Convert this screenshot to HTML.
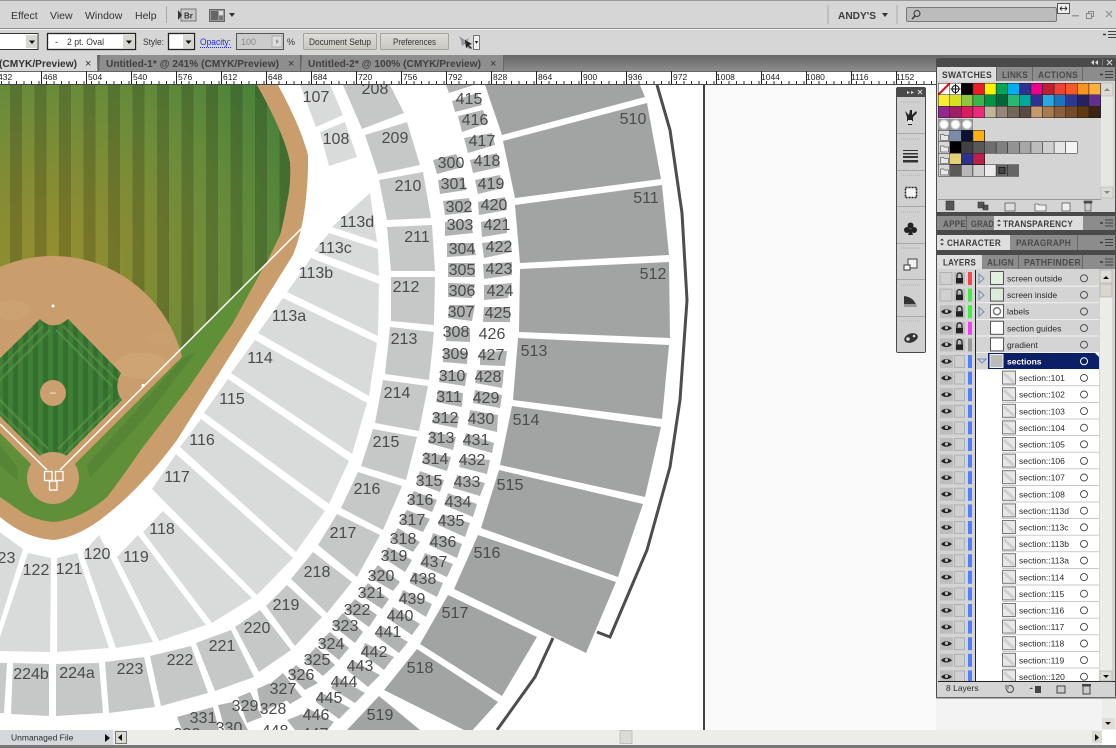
<!DOCTYPE html>
<html><head><meta charset="utf-8"><title>Illustrator</title>
<style>
html,body{margin:0;padding:0;background:#fff;width:1116px;height:748px;overflow:hidden}
svg{display:block}
text{font-family:"Liberation Sans",sans-serif}
.lb text{font-size:16px;fill:#4b4b4b;text-anchor:middle}
.m{font-size:10.5px;fill:#333}
.c{font-size:9px;fill:#333}
.t{font-size:10.5px;font-weight:bold}
.r{font-size:8.5px;fill:#222}
.p{font-size:9.5px;font-weight:bold;fill:#3d3d3d;letter-spacing:.3px}
.d{font-size:9.5px;font-weight:bold;fill:#4a4a4a;letter-spacing:.3px}
.n{font-size:8.5px;fill:#2a2a2a}
</style></head><body>
<svg width="1116" height="748" viewBox="0 0 1116 748" xmlns="http://www.w3.org/2000/svg">
<defs>
<clipPath id="cv"><rect x="0" y="85" width="1116" height="645"/></clipPath>
<clipPath id="of"><path d="M0 85L257 85Q285 135 290 163Q291 185 287 202Q284 220 280 235L266 264L53 477L0 424Z"/></clipPath>
<clipPath id="inf"><path d="M53 486L200 339L53 150L-94 339Z"/></clipPath>
<clipPath id="dia"><path d="M40 319Q53 332 68 319L121 373Q113 388 122 400L53 469L-16 400Q-7 388-15 373Z"/></clipPath>
<radialGradient id="gr" gradientUnits="userSpaceOnUse" cx="50" cy="265" r="290">
<stop offset="0" stop-color="#958f2e"/><stop offset=".3" stop-color="#858c33"/><stop offset=".6" stop-color="#6a8c3a"/><stop offset="1" stop-color="#44803a"/>
</radialGradient>
<pattern id="st" patternUnits="userSpaceOnUse" x="10" y="0" width="24.5" height="10"><rect width="12" height="10" fill="#000" fill-opacity=".17"/></pattern>
<pattern id="st2" patternUnits="userSpaceOnUse" x="3" y="0" width="10" height="10"><rect width="5" height="10" fill="#346f30"/></pattern>
<pattern id="mn" patternUnits="userSpaceOnUse" x="1" y="81" width="7.5" height="4"><rect width="1" height="4" fill="#333"/></pattern>
<pattern id="mj" patternUnits="userSpaceOnUse" x="41" y="71" width="45" height="14"><rect width="1" height="14" fill="#222"/></pattern>
<linearGradient id="tb" x1="0" y1="0" x2="0" y2="1"><stop offset="0" stop-color="#666"/><stop offset="1" stop-color="#8c8c8c"/></linearGradient>
<linearGradient id="btn" x1="0" y1="0" x2="0" y2="1"><stop offset="0" stop-color="#e0ded8"/><stop offset="1" stop-color="#c9c7c0"/></linearGradient>
<radialGradient id="rw"><stop offset="0" stop-color="#fff"/><stop offset=".6" stop-color="#fff"/><stop offset="1" stop-color="#999"/></radialGradient>

<g id="folder"><rect width="11" height="11" fill="#d8d8d8"/><path d="M2 4h3l1 1h4v5h-8z" fill="#e8e8e8" stroke="#666" stroke-width=".8"/></g>
<g id="eye"><rect x="940" y="2" width="13" height="13" fill="#bdbdbd"/><path d="M941 8.500Q946 3.500 952 8.500Q946 13 941 8.500Z" fill="#222"/><circle cx="946.500" cy="8" r="1.600" fill="#bbb"/></g>
<g id="blank"><rect x="940" y="2.500" width="12" height="12" fill="#d0d0d0" stroke="#b0b0b0"/></g>
<g id="lock"><rect x="954" y="2" width="11" height="13" fill="#bdbdbd"/><path d="M957 8v-2.500a2.500 2.500 0 0 1 5 0v2.500" fill="none" stroke="#222" stroke-width="1.300"/><rect x="956" y="8" width="7" height="5.500" fill="#222"/></g>
<g id="nolock"><rect x="954.500" y="2.500" width="10" height="12" fill="#d0d0d0" stroke="#b0b0b0"/></g>
<g id="sub"><rect x="976" y="0" width="123" height="16.600" fill="#fff"/><rect x="1002" y="15.800" width="97" height="1" fill="#bbb"/>
<use href="#eye"/><use href="#nolock"/><rect x="968" y="2" width="4" height="13" fill="#4f80ff"/>
<rect x="1002.500" y="1.500" width="13" height="13" fill="#e8e8e8" stroke="#777"/><path d="M1004 4l10 9" stroke="#cfcfcf" stroke-width="3"/>
<circle cx="1084" cy="8.300" r="3.500" fill="#fff" stroke="#444" stroke-width=".9"/></g>
<g id="top"><rect x="976" y="0" width="123" height="15.800" fill="#d4d4d4"/><rect x="976" y="15.800" width="123" height=".9" fill="#f4f4f4"/><circle cx="1084" cy="8.300" r="3.500" fill="none" stroke="#444" stroke-width=".9"/></g>
<g id="ham"><rect x="0" y="-.7" width="3" height="1.400" fill="#333"/><rect x="5" y="-3.500" width="8" height="1" fill="#444"/><rect x="5" y="-.5" width="8" height="1" fill="#444"/><rect x="5" y="2.500" width="8" height="1" fill="#444"/></g>
</defs>

<!-- canvas -->
<rect x="0" y="85" width="1116" height="645" fill="#fff"/>
<rect x="705" y="85" width="411" height="645" fill="#fafafa"/>
<g clip-path="url(#cv)">
<!-- field -->
<path d="M278 85Q300 125 308 155L308 168Q307 200 302 225Q298 243 293 255L240 340L177 440Q140 490 100 520Q75 538 53 540Q25 538 0 517L0 85Z" fill="#c99e6c"/>
<path d="M257 85Q285 135 290 163Q291 185 287 202Q284 220 280 235L263 268L233 323L187 390L143 447Q120 480 107 497Q80 520 53 522Q35 520 23 513L0 497L0 85Z" fill="#5f8f38"/>
<path d="M87 465L183 358L196 352L150 412L90 478Z" fill="#568535"/>
<path d="M0 445L18 468L17 480L0 465Z" fill="#568535"/>
<g clip-path="url(#of)"><rect x="0" y="85" width="300" height="450" fill="url(#gr)"/><rect x="0" y="85" width="300" height="450" fill="url(#st)"/></g>
<circle cx="53" cy="389" r="133" fill="#c99e6c" clip-path="url(#inf)"/>
<ellipse cx="12" cy="310" rx="18" ry="10" fill="#d4ab7c" opacity=".3"/>
<ellipse cx="142" cy="366" rx="28" ry="13" fill="#d4ab7c" opacity=".45"/>
<ellipse cx="160" cy="338" rx="14" ry="6" fill="#d4ab7c" opacity=".2"/>
<path d="M40 319Q53 332 68 319L121 373Q113 388 122 400L53 469L-16 400Q-7 388-15 373Z" fill="#3f7f37"/>
<g clip-path="url(#dia)">
<rect x="-20" y="315" width="150" height="160" fill="url(#st2)"/>
<path d="M63 326L118 381M56 330L112 386M118 400L62 456M111 395L58 449M43 326L-12 381M50 330L-6 386M-12 400L44 456M-5 395L48 449" stroke="#6a9a4c" stroke-width="2.500" opacity=".5" fill="none"/>
</g>
<circle cx="53" cy="478" r="26" fill="#cb9f6f"/>
<circle cx="53" cy="393" r="13" fill="#cb9f6f"/>
<rect x="50" y="392.500" width="6" height="1.200" fill="#eadbc4"/>
<circle cx="53" cy="306" r="1.500" fill="#fff"/>
<circle cx="143" cy="385.500" r="1.500" fill="#fff"/>
<path d="M302 228L60 470M0 424L47 470" stroke="#fff" stroke-width="1.500" fill="none"/>
<g fill="none" stroke="#fff" stroke-width="1.300"><rect x="44.500" y="471.500" width="7.500" height="9"/><rect x="55.500" y="471.500" width="7.500" height="9"/><rect x="49.500" y="481" width="7.500" height="9"/></g>

<!-- 100 level -->
<path fill="#d9dada" d="M316 127 343 115 330 85 300 85ZM320 132 345 122 357 157 329 166ZM332 227 370 193 377 242ZM329 233 378 249 379 276 314 251ZM311 258 379 284 378 336 287 292ZM283 298 377 343 369 396 258 333ZM255 340 367 403 352 454 231 373ZM228 379 349 461 329 504 204 413ZM201 419 325 511 296 552 180 447ZM176 454 293 558 257 595 152 489ZM163 511 252 598 212 623 143 532ZM138 535 206 625 159 641 117 557ZM99 535 153 642 116 648 83 553ZM77 553 109 648 57 652 57 558ZM28 553 51 558 50 652 0 651 0 637ZM0 532 5 536 23 549 0 622Z"/>
<!-- 200 level -->
<path fill="#c6c7c7" d="M343 85 390 85 404 113 362 129ZM365 135 407 122 420 165 378 174ZM379 180 423 172 431 218 387 220ZM387 227 432 225 435 271 391 271ZM391 277 435 277 434 325 391 321ZM390 327 434 332 429 380 385 374ZM383 380 428 386 419 431 375 423ZM373 429 417 437 406 480 361 466ZM358 472 402 486 383 530 341 508ZM337 514 380 535 357 577 318 545ZM313 552 352 582 327 613 291 579ZM287 585 322 617 295 646 266 606ZM260 610 291 650 259 672 235 627ZM231 630 254 677 215 691 196 643ZM191 646 208 693 161 706 150 656ZM144 657 155 707 109 713 105 662ZM99 663 103 713 56 716 56 664ZM49 664 49 716 11 714 13 663ZM7 663 4 713 0 713 0 663Z"/>
<!-- 300 level -->
<path fill="#b1b2b2" d="M433 160 456 154 463 167 437 174ZM438 180 463 177 466 190 440 194ZM443 201 469 198 472 212 445 215ZM445 222 470 220 473 233 445 236ZM447 243 473 243 476 255 447 257ZM448 263 475 263 475 277 448 277ZM448 283 475 284 472 298 448 297ZM449 305 475 305 472 321 448 318ZM446 327 470 328 470 342 446 341ZM444 348 468 352 467 364 443 362ZM441 370 467 373 465 386 439 382ZM438 390 463 393 462 407 436 402ZM435 412 459 416 457 428 432 423ZM431 431 456 437 453 450 428 443ZM425 452 451 457 447 471 422 463ZM420 471 444 480 440 492 416 483ZM414 491 437 500 432 512 407 502ZM407 510 430 519 423 532 399 522ZM398 528 420 542 413 552 390 540ZM388 547 412 560 405 572 382 557ZM378 565 400 582 393 591 369 577ZM368 583 389 599 382 609 359 594ZM355 599 377 615 369 627 345 610ZM343 613 363 632 355 643 332 625ZM330 632 349 648 339 660 318 643ZM316 647 335 665 323 676 304 660ZM296 665 318 683 305 690 288 673ZM283 673 302 697 290 704 271 683ZM257 689 270 683 288 700 262 712ZM238 697 250 692 262 717 247 723ZM218 705 233 702 248 730 225 730ZM177 717 213 707 219 730 182 730Z"/>
<!-- 400 level -->
<path fill="#b1b2b2" d="M446 85 474 85 449 93ZM452 101 477 93 482 105 455 112ZM458 116 483 110 488 123 462 132ZM464 138 492 133 495 145 468 153ZM470 160 497 153 500 167 473 173ZM475 180 500 175 503 188 478 194ZM478 202 505 197 507 210 479 215ZM481 222 506 217 507 233 482 237ZM482 243 510 240 512 252 484 258ZM483 264 512 262 512 275 484 279ZM484 285 512 283 508 298 484 300ZM484 307 510 307 510 322 483 322ZM480 352 507 351 505 366 480 365ZM477 370 504 370 502 388 475 383ZM475 390 502 395 500 408 473 403ZM470 410 498 415 497 432 468 425ZM466 433 494 443 492 453 463 445ZM462 457 490 460 487 474 459 467ZM457 475 485 483 480 496 453 488ZM448 493 477 504 473 517 444 505ZM442 514 470 523 465 537 438 525ZM433 533 462 544 457 558 429 545ZM425 553 453 564 447 577 420 565ZM413 572 443 583 437 597 410 583ZM403 590 432 604 426 617 399 600ZM393 607 420 624 412 635 387 618ZM380 625 408 642 399 653 376 636ZM365 643 394 657 384 670 361 653ZM352 660 380 675 368 687 347 670ZM337 677 365 693 355 703 331 688ZM320 692 350 708 339 719 316 702ZM307 708 334 722 325 733 303 718ZM287 720 302 714 325 730 295 730Z"/>
<!-- 500 level -->
<path fill="#a2a3a3" d="M485 85 640 85 645 97 502 135ZM503 141 647 103 661 179 515 198ZM515 205 662 185 669 255 520 263ZM520 269 669 262 670 338 519 332ZM518 338 669 345 662 419 513 400ZM512 406 661 427 645 497 500 465ZM499 470 643 504 618 577 481 528ZM478 535 616 582 586 653 454 589ZM448 595 537 637 502 696 420 644ZM417 649 498 702 470 733 384 690ZM379 696 420 730 347 730Z"/>
<!-- outer wall -->
<path d="M657 85L670 130L682 213L687 300L680 400L670 467L647 550L610 637L597 632M553 638L535 677L497 730" fill="none" stroke="#4d4d4d" stroke-width="3"/>
<rect x="703" y="85" width="2" height="645" fill="#444"/>
<g class="lb">
<text x="316" y="102">107</text><text x="336" y="144">108</text><text x="375" y="94">208</text><text x="395" y="143">209</text><text x="408" y="191">210</text><text x="417" y="242">211</text><text x="406" y="292">212</text><text x="404" y="344">213</text><text x="397" y="398">214</text><text x="386" y="447">215</text><text x="367" y="494">216</text><text x="343" y="538">217</text><text x="317" y="577">218</text><text x="286" y="610">219</text><text x="257" y="633">220</text><text x="222" y="651">221</text><text x="180" y="665">222</text><text x="130" y="674">223</text><text x="77" y="678">224a</text><text x="31" y="679">224b</text>
<text x="357" y="227">113d</text><text x="335" y="253">113c</text><text x="316" y="278">113b</text><text x="289" y="321">113a</text><text x="260" y="363">114</text><text x="232" y="404">115</text><text x="202" y="445">116</text><text x="177" y="482">117</text><text x="162" y="534">118</text><text x="136" y="562">119</text><text x="97" y="559">120</text><text x="69" y="574">121</text><text x="36" y="575">122</text><text x="2" y="563">123</text>
<text x="451" y="168">300</text><text x="454" y="189">301</text><text x="459" y="212">302</text><text x="460" y="230">303</text><text x="462" y="254">304</text><text x="462" y="275">305</text><text x="462" y="296">306</text><text x="461" y="317">307</text><text x="456" y="337">308</text><text x="455" y="359">309</text><text x="452" y="381">310</text><text x="449" y="402">311</text><text x="445" y="423">312</text><text x="441" y="443">313</text><text x="435" y="464">314</text><text x="429" y="486">315</text><text x="420" y="505">316</text><text x="412" y="525">317</text><text x="403" y="544">318</text><text x="394" y="561">319</text><text x="381" y="581">320</text><text x="371" y="598">321</text><text x="357" y="615">322</text><text x="345" y="631">323</text><text x="331" y="649">324</text><text x="317" y="665">325</text><text x="301" y="680">326</text><text x="283" y="694">327</text><text x="273" y="714">328</text><text x="245" y="711">329</text><text x="229" y="733">330</text><text x="203" y="723">331</text><text x="187" y="739">332</text>
<text x="469" y="104">415</text><text x="475" y="125">416</text><text x="482" y="146">417</text><text x="487" y="166">418</text><text x="491" y="189">419</text><text x="494" y="210">420</text><text x="497" y="230">421</text><text x="499" y="252">422</text><text x="499" y="274">423</text><text x="500" y="296">424</text><text x="498" y="318">425</text><text x="492" y="339">426</text><text x="491" y="360">427</text><text x="488" y="382">428</text><text x="486" y="403">429</text><text x="481" y="424">430</text><text x="476" y="445">431</text><text x="472" y="465">432</text><text x="467" y="487">433</text><text x="458" y="507">434</text><text x="451" y="526">435</text><text x="443" y="547">436</text><text x="434" y="567">437</text><text x="423" y="584">438</text><text x="412" y="604">439</text><text x="400" y="621">440</text><text x="388" y="637">441</text><text x="374" y="657">442</text><text x="360" y="671">443</text><text x="344" y="687">444</text><text x="329" y="703">445</text><text x="316" y="720">446</text><text x="315" y="739">447</text><text x="275" y="736">448</text>
<text x="633" y="124">510</text><text x="646" y="203">511</text><text x="653" y="279">512</text><text x="534" y="356">513</text><text x="526" y="425">514</text><text x="510" y="490">515</text><text x="487" y="558">516</text><text x="455" y="618">517</text><text x="420" y="673">518</text><text x="380" y="720">519</text>
</g>
</g>

<!-- menu bar -->
<rect x="0" y="0" width="1116" height="55" fill="#d6d6d6"/>
<rect x="0" y="0" width="1116" height="1" fill="#999"/>
<rect x="0" y="28" width="1116" height="1" fill="#8f8f8f"/>
<rect x="0" y="29" width="1116" height="1" fill="#eee"/>
<text class="m" x="11" y="19">Effect</text><text class="m" x="50" y="19">View</text><text class="m" x="85" y="19">Window</text><text class="m" x="135" y="19">Help</text>
<rect x="166" y="6" width="1" height="17" fill="#aaa"/>
<rect x="181" y="9" width="15" height="12" fill="#c8c8c8" stroke="#777"/><path d="M178 10l4 5-4 5z" fill="#333"/>
<text x="184" y="18.500" style="font-size:8px;font-weight:bold;fill:#333">Br</text>
<rect x="209.500" y="9.500" width="15" height="12" fill="#999" stroke="#666"/><rect x="211" y="11" width="7" height="9" fill="#666"/><rect x="219" y="11" width="4" height="4" fill="#ddd"/><rect x="219" y="16" width="4" height="4" fill="#777"/>
<path d="M229 13h6l-3 4z" fill="#333"/>
<rect x="827.500" y="5" width="1" height="19" fill="#aaa"/>
<text x="838" y="19" style="font-size:10.500px;font-weight:bold;fill:#3c3c3c" textLength="38" lengthAdjust="spacingAndGlyphs">ANDY'S</text>
<path d="M882 13h6l-3 4z" fill="#333"/>
<rect x="896.500" y="5" width="1" height="19" fill="#aaa"/>
<rect x="906.500" y="7.500" width="150" height="14" rx="1.500" fill="#bcbcbc" stroke="#777"/>
<circle cx="917" cy="13.500" r="3" fill="none" stroke="#333"/><path d="M915 16l-3 3" stroke="#333" stroke-width="1.300"/>
<rect x="1057.500" y="3.500" width="12" height="10" fill="#eee" stroke="#555"/><path d="M1060 8.500h7M1060 8.500l2-2M1060 8.500l2 2M1067 8.500l-2-2M1067 8.500l-2 2" stroke="#111" fill="none" stroke-width=".8"/>
<rect x="1072" y="15" width="7" height="1.500" fill="#999"/>
<rect x="1088.500" y="11.500" width="5" height="5" fill="none" stroke="#888"/><rect x="1086.500" y="13.500" width="5" height="5" fill="#d6d6d6" stroke="#888"/>
<path d="M1106 11l6 6M1112 11l-6 6" stroke="#999" stroke-width="1.300"/>

<!-- control bar -->
<rect x="-3" y="33.500" width="41" height="16" fill="#fff" stroke="#333"/><rect x="26" y="35" width="11" height="13" fill="#d8d6d0"/><path d="M29 40.500h6l-3 3.500z" fill="#111"/>
<rect x="47.500" y="33.500" width="88" height="16" fill="#fff" stroke="#222" stroke-width="1.300"/><rect x="123" y="35" width="12" height="13.500" fill="#d8d6d0"/><path d="M126 40.500h6l-3 3.500z" fill="#111"/>
<text class="c" x="55" y="45">-</text><text class="c" x="67" y="45" textLength="37" lengthAdjust="spacingAndGlyphs">2 pt. Oval</text>
<text class="c" x="143" y="45" textLength="21" lengthAdjust="spacingAndGlyphs">Style:</text>
<rect x="168.500" y="33.500" width="26" height="16" fill="#fff" stroke="#222" stroke-width="1.300"/><rect x="183" y="35" width="11" height="13.500" fill="#d8d6d0"/><path d="M185.500 40.500h6l-3 3.500z" fill="#111"/>
<text x="200" y="45" style="font-size:9px;fill:#2030e0" textLength="31" lengthAdjust="spacingAndGlyphs">Opacity:</text><path d="M200 47.500h32" stroke="#2030e0" stroke-dasharray="1 1"/>
<rect x="236.500" y="33.500" width="47" height="16" fill="#ccc" stroke="#555"/><text x="241" y="45" style="font-size:9px;fill:#8a8a8a">100</text>
<rect x="272" y="36" width="10" height="11" fill="#ddd" stroke="#aaa"/><path d="M276 39v5l3-2.500z" fill="#999"/>
<text class="c" x="287" y="45">%</text>
<rect x="303.500" y="33.500" width="73" height="16" rx="1" fill="url(#btn)" stroke="#a5a39c"/><text class="c" x="309" y="45" textLength="62" lengthAdjust="spacingAndGlyphs">Document Setup</text>
<rect x="380.500" y="33.500" width="68" height="16" rx="1" fill="url(#btn)" stroke="#a5a39c"/><text class="c" x="393" y="45" textLength="43" lengthAdjust="spacingAndGlyphs">Preferences</text>
<path d="M459 36l6 4 4-2-2 5 3 6-3-1-2-4-3 2-1-5z" fill="#999"/><path d="M465 40l1 8 2-2 3 3 1-1-3-3 3-1z" fill="#222"/>
<rect x="473.500" y="35.500" width="6" height="14" fill="#eee" stroke="#777"/><path d="M475 41h3l-1.500 3z" fill="#111"/>
<use href="#ham" x="1103" y="34.500"/>

<!-- tabs -->
<rect x="0" y="55" width="1116" height="16" fill="url(#tb)"/>
<rect x="0" y="55" width="97" height="16" fill="#d6d6d6"/>
<rect x="100" y="55" width="200" height="16" fill="#8e8e8e"/><rect x="302" y="55" width="201" height="16" fill="#8e8e8e"/>
<rect x="300" y="55" width="1" height="16" fill="#666"/><rect x="98" y="55" width="1" height="16" fill="#666"/><rect x="503" y="55" width="1" height="16" fill="#666"/>
<text class="t" x="-1" y="67" fill="#333" textLength="78" lengthAdjust="spacingAndGlyphs">(CMYK/Preview)</text>
<text x="85" y="67" style="font-size:11px;fill:#333">×</text>
<text class="t" x="106" y="67" fill="#404040" textLength="173" lengthAdjust="spacingAndGlyphs">Untitled-1* @ 241% (CMYK/Preview)</text>
<text x="288" y="67" style="font-size:11px;fill:#333">×</text>
<text class="t" x="308" y="67" fill="#404040" textLength="173" lengthAdjust="spacingAndGlyphs">Untitled-2* @ 100% (CMYK/Preview)</text>
<text x="490" y="67" style="font-size:11px;fill:#333">×</text>

<!-- ruler -->
<rect x="0" y="71" width="1116" height="14" fill="#fff"/>
<rect x="0" y="71" width="1116" height="1" fill="#666"/>
<rect x="0" y="81" width="1116" height="4" fill="url(#mn)"/>
<rect x="0" y="71" width="1116" height="14" fill="url(#mj)"/>
<rect x="0" y="84" width="1116" height="1" fill="#444"/>
<g class="r"><text class="r" x="-2" y="80">432</text><text class="r" x="43" y="80">468</text><text class="r" x="88" y="80">504</text><text class="r" x="133" y="80">540</text><text class="r" x="178" y="80">576</text><text class="r" x="223" y="80">612</text><text class="r" x="268" y="80">648</text><text class="r" x="313" y="80">684</text><text class="r" x="358" y="80">720</text><text class="r" x="403" y="80">756</text><text class="r" x="448" y="80">792</text><text class="r" x="493" y="80">828</text><text class="r" x="538" y="80">864</text><text class="r" x="583" y="80">900</text><text class="r" x="628" y="80">936</text><text class="r" x="673" y="80">972</text><text class="r" x="716" y="80">1008</text><text class="r" x="761" y="80">1044</text><text class="r" x="806" y="80">1080</text><text class="r" x="851" y="80">1116</text><text class="r" x="896" y="80">1152</text></g>

<!-- tool strip -->
<rect x="896" y="87" width="30" height="266" rx="2" fill="#4a4a4a"/>
<path d="M907 91l3 1.500-3 1.500zM911 91l3 1.500-3 1.500z" fill="#ddd"/><path d="M918 90l4 4M922 90l-4 4" stroke="#ddd"/>
<rect x="897" y="97" width="28" height="255" fill="#d0d0d0"/>
<g fill="#a8a8a8"><rect x="897" y="133" width="28" height="1"/><rect x="897" y="170" width="28" height="1"/><rect x="897" y="206" width="28" height="1"/><rect x="897" y="243" width="28" height="1"/><rect x="897" y="279" width="28" height="1"/><rect x="897" y="316" width="28" height="1"/></g>
<g stroke="#b0b0b0" stroke-dasharray="1 1"><path d="M901 102h20M901 139h20M901 175h20M901 212h20M901 248h20M901 285h20M901 321h20"/></g>
<path d="M905 111l4 4 1-5 2 0 0 5 4-4 1 2-4 4v4h-1v4h-4v-4h-1v-4z" fill="#222"/><rect x="908" y="120" width="4" height="4" fill="#ddd"/>
<path d="M903 150h15v1h-15zM903 153h15v1.500h-15zM903 156h15v2h-15zM903 160h15v2.500h-15z" fill="#333"/>
<rect x="905.500" y="187.500" width="11" height="10" fill="#f4f4f4" stroke="#222" stroke-dasharray="2 1" stroke-width="1.500"/>
<circle cx="910.500" cy="225.500" r="3" fill="#222"/><circle cx="907" cy="230" r="3" fill="#222"/><circle cx="914" cy="230" r="3" fill="#222"/><path d="M910.500 228L908 235h5z" fill="#222"/>
<rect x="908" y="259" width="9" height="9" fill="#f2f2f2" stroke="#444"/><rect x="904" y="265" width="6" height="5" fill="#fff" stroke="#333"/>
<path d="M904 307v-11q10 1 13 11z" fill="#333"/><path d="M917 307h-13v-3h12z" fill="#999"/>
<ellipse cx="911" cy="338" rx="7" ry="4.500" fill="#333" transform="rotate(-20 911 338)"/><circle cx="908" cy="339" r="1.800" fill="#ddd"/><circle cx="914" cy="336" r="1.300" fill="#ddd"/>

<!-- right panel -->
<rect x="936" y="58" width="180" height="640" rx="2" fill="#4a4a4a"/>
<path d="M1094 60l-3 2.500 3 2.500zM1098 60l-3 2.500 3 2.500z" fill="#ddd"/><path d="M1107 60l5 5M1112 60l-5 5" stroke="#ddd"/>
<rect x="1102" y="59" width="1" height="7" fill="#777"/>

<!-- swatches tabs -->
<rect x="937" y="67" width="178" height="14" fill="#8c8c8c"/>
<rect x="937" y="67" width="59" height="14" fill="#dedede"/>
<rect x="1032" y="67" width="1" height="14" fill="#666"/><rect x="1082" y="67" width="1" height="14" fill="#666"/><rect x="996" y="67" width="1" height="14" fill="#666"/>
<text class="p" x="942" y="78" textLength="50" lengthAdjust="spacingAndGlyphs">SWATCHES</text>
<text class="d" x="1002" y="78" textLength="26" lengthAdjust="spacingAndGlyphs">LINKS</text>
<text class="d" x="1038" y="78" textLength="40" lengthAdjust="spacingAndGlyphs">ACTIONS</text>
<use href="#ham" x="1100" y="74.500"/>
<rect x="937" y="81" width="178" height="131" fill="#d4d4d4"/>
<!-- swatch grid -->
<g>
<rect x="938" y="83" width="164" height="35" fill="#222"/>
<rect x="938.500" y="83.500" width="11" height="11" fill="#fff"/><path d="M938.500 94.500l11-11" stroke="#e01010" stroke-width="2"/>
<rect x="950" y="83.500" width="11" height="11" fill="#fff"/><circle cx="955.500" cy="89" r="3.500" fill="none" stroke="#111"/><path d="M955.500 84v10M950.500 89h10" stroke="#111"/>
<g id="row1"><rect x="961.500" y="83.500" width="11" height="11" fill="#000"/><rect x="973.200" y="83.500" width="11" height="11" fill="#ed1c24"/><rect x="984.800" y="83.500" width="11" height="11" fill="#fff200"/><rect x="996.400" y="83.500" width="11" height="11" fill="#00a651"/><rect x="1008" y="83.500" width="11" height="11" fill="#00aeef"/><rect x="1019.600" y="83.500" width="11" height="11" fill="#2e3192"/><rect x="1031.200" y="83.500" width="11" height="11" fill="#ec008c"/><rect x="1042.800" y="83.500" width="11" height="11" fill="#be1e2d"/><rect x="1054.400" y="83.500" width="11" height="11" fill="#ef4136"/><rect x="1066" y="83.500" width="11" height="11" fill="#f15a29"/><rect x="1077.600" y="83.500" width="11" height="11" fill="#f7941e"/><rect x="1089.200" y="83.500" width="11" height="11" fill="#fbb040"/></g>
<g><rect x="938.500" y="95" width="11" height="11" fill="#f9ed32"/><rect x="950" y="95" width="11" height="11" fill="#d7df23"/><rect x="961.500" y="95" width="11" height="11" fill="#8dc63f"/><rect x="973.200" y="95" width="11" height="11" fill="#39b54a"/><rect x="984.800" y="95" width="11" height="11" fill="#009444"/><rect x="996.400" y="95" width="11" height="11" fill="#006838"/><rect x="1008" y="95" width="11" height="11" fill="#2bb673"/><rect x="1019.600" y="95" width="11" height="11" fill="#00a79d"/><rect x="1031.200" y="95" width="11" height="11" fill="#2e3192"/><rect x="1042.800" y="95" width="11" height="11" fill="#27aae1"/><rect x="1054.400" y="95" width="11" height="11" fill="#1c75bc"/><rect x="1066" y="95" width="11" height="11" fill="#2b3990"/><rect x="1077.600" y="95" width="11" height="11" fill="#262262"/><rect x="1089.200" y="95" width="11" height="11" fill="#662d91"/></g>
<g><rect x="938.500" y="106.500" width="11" height="11" fill="#92278f"/><rect x="950" y="106.500" width="11" height="11" fill="#9e1f63"/><rect x="961.500" y="106.500" width="11" height="11" fill="#da1c5c"/><rect x="973.200" y="106.500" width="11" height="11" fill="#ee2a7b"/><rect x="984.800" y="106.500" width="11" height="11" fill="#c2b59b"/><rect x="996.400" y="106.500" width="11" height="11" fill="#9b8579"/><rect x="1008" y="106.500" width="11" height="11" fill="#726658"/><rect x="1019.600" y="106.500" width="11" height="11" fill="#594a42"/><rect x="1031.200" y="106.500" width="11" height="11" fill="#c49a6c"/><rect x="1042.800" y="106.500" width="11" height="11" fill="#a97c50"/><rect x="1054.400" y="106.500" width="11" height="11" fill="#8b5e3c"/><rect x="1066" y="106.500" width="11" height="11" fill="#754c29"/><rect x="1077.600" y="106.500" width="11" height="11" fill="#603913"/><rect x="1089.200" y="106.500" width="11" height="11" fill="#3c2415"/></g>
<rect x="938" y="119" width="35" height="11" fill="#888"/>
<rect x="938.500" y="119" width="11" height="11" fill="url(#rw)"/><rect x="950" y="119" width="11" height="11" fill="url(#rw)"/><rect x="961.500" y="119" width="11" height="11" fill="url(#rw)"/>
<rect x="938" y="130" width="47" height="11.500" fill="#222"/><use href="#folder" x="938.500" y="130.500"/><rect x="950" y="130.500" width="11" height="10.500" fill="#7b8ca8"/><rect x="961.500" y="130.500" width="11" height="10.500" fill="#0d1030"/><rect x="973.200" y="130.500" width="11" height="10.500" fill="#fbb016"/>
<rect x="938" y="141.500" width="139.500" height="12" fill="#222"/><use href="#folder" x="938.500" y="142"/><rect x="950" y="142" width="11" height="11" fill="#000"/><rect x="961.500" y="142" width="11" height="11" fill="#404040"/><rect x="973.200" y="142" width="11" height="11" fill="#585858"/><rect x="984.800" y="142" width="11" height="11" fill="#6d6d6d"/><rect x="996.400" y="142" width="11" height="11" fill="#808080"/><rect x="1008" y="142" width="11" height="11" fill="#939393"/><rect x="1019.600" y="142" width="11" height="11" fill="#a7a7a7"/><rect x="1031.200" y="142" width="11" height="11" fill="#bcbcbc"/><rect x="1042.800" y="142" width="11" height="11" fill="#d0d0d0"/><rect x="1054.400" y="142" width="11" height="11" fill="#e6e6e6"/><rect x="1066" y="142" width="11" height="11" fill="#f4f4f4"/>
<rect x="938" y="153.500" width="47" height="11" fill="#222"/><use href="#folder" x="938.500" y="153.500"/><rect x="950" y="153.500" width="11" height="10.500" fill="#e3cf75"/><rect x="961.500" y="153.500" width="11" height="10.500" fill="#2e3192"/><rect x="973.200" y="153.500" width="11" height="10.500" fill="#be1e4d"/>
<rect x="938" y="164.500" width="81" height="12" fill="#222"/><use href="#folder" x="938.500" y="165"/><rect x="950" y="165" width="11" height="11" fill="#5a5a5a"/><rect x="961.500" y="165" width="11" height="11" fill="#b8b8b8"/><rect x="973.200" y="165" width="11" height="11" fill="#d0d0d0"/><rect x="984.800" y="165" width="11" height="11" fill="#ececec"/><rect x="996.400" y="165" width="11" height="11" fill="#666"/><rect x="999" y="167.500" width="6" height="6" fill="#444" stroke="#222"/><rect x="1008" y="165" width="11" height="11" fill="#666"/>
</g>
<rect x="1101" y="83" width="12" height="115" fill="#e6e6e2"/>
<rect x="1101" y="83" width="12" height="13" fill="#dcdad4" stroke="#aaa" stroke-width=".5"/><path d="M1104 91l3-3 3 3z" fill="#888"/>
<rect x="1101" y="187" width="12" height="11" fill="#dcdad4" stroke="#aaa" stroke-width=".5"/><path d="M1104 191l3 3 3-3z" fill="#888"/>
<rect x="938" y="199" width="163" height="1" fill="#999"/>
<g fill="#555" stroke="#333" stroke-width=".6">
<rect x="946" y="201" width="8" height="9"/><path d="M978 202h6v6h-6zM983 205h5v5h-5z"/><rect x="1005" y="203" width="10" height="8" fill="#ddd"/><path d="M1035 204h3l1 1h7v6h-11z" fill="#eee"/><rect x="1062" y="203" width="8" height="8" fill="#eee"/><rect x="1085" y="203" width="6" height="8" fill="#ccc"/><rect x="1084" y="201" width="8" height="2"/>
</g>

<!-- collapsed tab rows -->
<rect x="937" y="216" width="178" height="14" fill="#8c8c8c"/><rect x="966" y="216" width="1" height="14" fill="#666"/>
<rect x="994" y="216" width="89" height="14" fill="#dedede"/>
<text class="d" x="943" y="227" textLength="23" lengthAdjust="spacingAndGlyphs">APPE</text>
<text class="d" x="971" y="227" textLength="23" lengthAdjust="spacingAndGlyphs">GRAD</text>
<path d="M997 221.500l2-2 2 2zM997 224.500l2 2 2-2z" fill="#333"/>
<text class="p" x="1003" y="227" textLength="70" lengthAdjust="spacingAndGlyphs">TRANSPARENCY</text>
<use href="#ham" x="1100" y="223"/>

<rect x="937" y="235" width="178" height="15" fill="#8c8c8c"/>
<rect x="937" y="235" width="73" height="15" fill="#dedede"/><rect x="1077" y="235" width="1" height="15" fill="#666"/>
<path d="M940 240.500l2-2 2 2zM940 243.500l2 2 2-2z" fill="#333"/>
<text class="p" x="947" y="246" textLength="54" lengthAdjust="spacingAndGlyphs">CHARACTER</text>
<text class="d" x="1016" y="246" textLength="55" lengthAdjust="spacingAndGlyphs">PARAGRAPH</text>
<use href="#ham" x="1100" y="242.500"/>

<rect x="937" y="255" width="178" height="14" fill="#8c8c8c"/>
<rect x="937" y="255" width="45" height="14" fill="#dedede"/><rect x="1018" y="255" width="1" height="14" fill="#666"/><rect x="1082" y="255" width="1" height="14" fill="#666"/>
<text class="p" x="943" y="265.500" textLength="33" lengthAdjust="spacingAndGlyphs">LAYERS</text>
<text class="d" x="987" y="265.500" textLength="27" lengthAdjust="spacingAndGlyphs">ALIGN</text>
<text class="d" x="1024" y="265.500" textLength="57" lengthAdjust="spacingAndGlyphs">PATHFINDER</text>
<use href="#ham" x="1100" y="262"/>

<!-- layers body -->
<rect x="937" y="269" width="178" height="429" fill="#d4d4d4"/>
<rect x="975" y="270" width="1" height="411" fill="#222"/>
<rect x="976" y="270" width="123" height="411" fill="#fff"/>
<g transform="translate(0,270)"><use href="#top"/><use href="#blank"/><use href="#lock"/><rect x="968" y="2" width="4" height="13" fill="#f04848"/><path d="M979 4l5 4.500-5 4.500z" fill="none" stroke="#7090b8"/><rect x="990.500" y="1.500" width="13" height="13" fill="#e4efe4" stroke="#555"/><text class="n" x="1007" y="11.500">screen outside</text></g>
<g transform="translate(0,286.600)"><use href="#top"/><use href="#blank"/><use href="#lock"/><rect x="968" y="2" width="4" height="13" fill="#40ee40"/><path d="M979 4l5 4.500-5 4.500z" fill="none" stroke="#7090b8"/><rect x="990.500" y="1.500" width="13" height="13" fill="#dcebdc" stroke="#555"/><text class="n" x="1007" y="11.500">screen inside</text></g>
<g transform="translate(0,303.200)"><use href="#top"/><use href="#eye"/><use href="#lock"/><rect x="968" y="2" width="4" height="13" fill="#40ee40"/><path d="M979 4l5 4.500-5 4.500z" fill="none" stroke="#7090b8"/><rect x="990.500" y="1.500" width="13" height="13" fill="#fff" stroke="#555"/><circle cx="997" cy="8" r="3.500" fill="none" stroke="#777" stroke-width="1.500"/><text class="n" x="1007" y="11.500">labels</text></g>
<g transform="translate(0,319.800)"><use href="#top"/><use href="#eye"/><use href="#lock"/><rect x="968" y="2" width="4" height="13" fill="#f040f0"/><rect x="990.500" y="1.500" width="13" height="13" fill="#fff" stroke="#555"/><text class="n" x="1007" y="11.500">section guides</text></g>
<g transform="translate(0,336.400)"><use href="#top"/><use href="#eye"/><use href="#lock"/><rect x="968" y="2" width="4" height="13" fill="#999"/><rect x="990.500" y="1.500" width="13" height="13" fill="#fff" stroke="#555"/><text class="n" x="1007" y="11.500">gradient</text></g>
<g transform="translate(0,353)"><path d="M988 0H1095L1099 4V16H988Z" fill="#0b1f66"/><rect x="976" y="0" width="12" height="16.600" fill="#d4d4d4"/><use href="#eye"/><use href="#nolock"/><rect x="968" y="2" width="4" height="13" fill="#4f80ff"/><path d="M978 6l8 0-4 4z" fill="none" stroke="#7090b8"/><rect x="990" y="1.500" width="13" height="13" fill="#bbb" stroke="#eee"/><text x="1007" y="11.500" style="font-size:8.500px;font-weight:bold;fill:#fff">sections</text><circle cx="1084" cy="8.300" r="3.500" fill="none" stroke="#fff"/></g>
<g transform="translate(0,369.600)"><use href="#sub"/><text class="n" x="1019" y="11.500">section::101</text></g>
<g transform="translate(0,386.200)"><use href="#sub"/><text class="n" x="1019" y="11.500">section::102</text></g>
<g transform="translate(0,402.800)"><use href="#sub"/><text class="n" x="1019" y="11.500">section::103</text></g>
<g transform="translate(0,419.400)"><use href="#sub"/><text class="n" x="1019" y="11.500">section::104</text></g>
<g transform="translate(0,436)"><use href="#sub"/><text class="n" x="1019" y="11.500">section::105</text></g>
<g transform="translate(0,452.600)"><use href="#sub"/><text class="n" x="1019" y="11.500">section::106</text></g>
<g transform="translate(0,469.200)"><use href="#sub"/><text class="n" x="1019" y="11.500">section::107</text></g>
<g transform="translate(0,485.800)"><use href="#sub"/><text class="n" x="1019" y="11.500">section::108</text></g>
<g transform="translate(0,502.400)"><use href="#sub"/><text class="n" x="1019" y="11.500">section::113d</text></g>
<g transform="translate(0,519)"><use href="#sub"/><text class="n" x="1019" y="11.500">section::113c</text></g>
<g transform="translate(0,535.600)"><use href="#sub"/><text class="n" x="1019" y="11.500">section::113b</text></g>
<g transform="translate(0,552.200)"><use href="#sub"/><text class="n" x="1019" y="11.500">section::113a</text></g>
<g transform="translate(0,568.800)"><use href="#sub"/><text class="n" x="1019" y="11.500">section::114</text></g>
<g transform="translate(0,585.400)"><use href="#sub"/><text class="n" x="1019" y="11.500">section::115</text></g>
<g transform="translate(0,602)"><use href="#sub"/><text class="n" x="1019" y="11.500">section::116</text></g>
<g transform="translate(0,618.600)"><use href="#sub"/><text class="n" x="1019" y="11.500">section::117</text></g>
<g transform="translate(0,635.200)"><use href="#sub"/><text class="n" x="1019" y="11.500">section::118</text></g>
<g transform="translate(0,651.800)"><use href="#sub"/><text class="n" x="1019" y="11.500">section::119</text></g>
<g transform="translate(0,668.400)"><use href="#sub"/><text class="n" x="1019" y="11.500">section::120</text></g>
<rect x="937" y="681" width="178" height="17" fill="#d4d4d4"/>
<rect x="938" y="681" width="177" height="1" fill="#222"/>
<text class="n" x="946" y="691" fill="#333">8 Layers</text>
<g fill="#444"><circle cx="1010" cy="689" r="3.500" fill="none" stroke="#444"/><rect x="1005" y="685" width="4" height="4" fill="#999"/><path d="M1029 689h4l-1.500-1.500M1035 686h6v7h-6z"/><rect x="1057" y="686" width="8" height="7" fill="#ccc" stroke="#444"/><rect x="1083" y="686" width="7" height="8" fill="#ccc" stroke="#444"/><rect x="1082" y="684" width="9" height="2"/></g>
<rect x="1100" y="270" width="12" height="411" fill="#ecece8"/>
<rect x="1100" y="270" width="12" height="13" fill="#e0ded8" stroke="#999" stroke-width=".5"/><path d="M1103 279l3-3 3 3z" fill="#111"/>
<rect x="1100" y="284" width="12" height="13" fill="#d8d6ce" stroke="#999" stroke-width=".5"/>
<rect x="1100" y="671" width="12" height="10" fill="#e0ded8" stroke="#999" stroke-width=".5"/><path d="M1103 675l3 3 3-3z" fill="#111"/>
<rect x="936" y="697" width="180" height="1.500" fill="#666"/>

<!-- outer right scrollbar -->
<rect x="936" y="699" width="180" height="31" fill="#f3f3f3"/>
<rect x="1102" y="699" width="14" height="31" fill="#ecece8"/>
<rect x="1102" y="718" width="13" height="11" fill="#e0ded8"/><path d="M1105 722l3 3 3-3z" fill="#111"/>

<!-- status -->
<rect x="0" y="730" width="1116" height="15" fill="#ecece8"/>
<rect x="0" y="730" width="113" height="15" fill="#d5d8dc"/>
<rect x="0" y="745" width="1116" height="3" fill="#777"/>
<text class="n" x="11" y="740.500" fill="#222">Unmanaged File</text>
<path d="M105 734l5 4-5 4z" fill="#111"/>
<rect x="115.500" y="731.500" width="11" height="12" fill="#dcdad4" stroke="#777"/><path d="M122 734l-4 3.500 4 3.500z" fill="#111"/>
<rect x="620" y="730.500" width="12" height="13" fill="#dcdad4" stroke="#aaa" stroke-width=".6"/>
<rect x="1092" y="731" width="10" height="12" fill="#dcdad4"/><path d="M1095 734l4 3.500-4 3.500z" fill="#111"/>
<rect x="1102" y="730" width="14" height="15" fill="#fff"/>
</svg>
</body></html>
